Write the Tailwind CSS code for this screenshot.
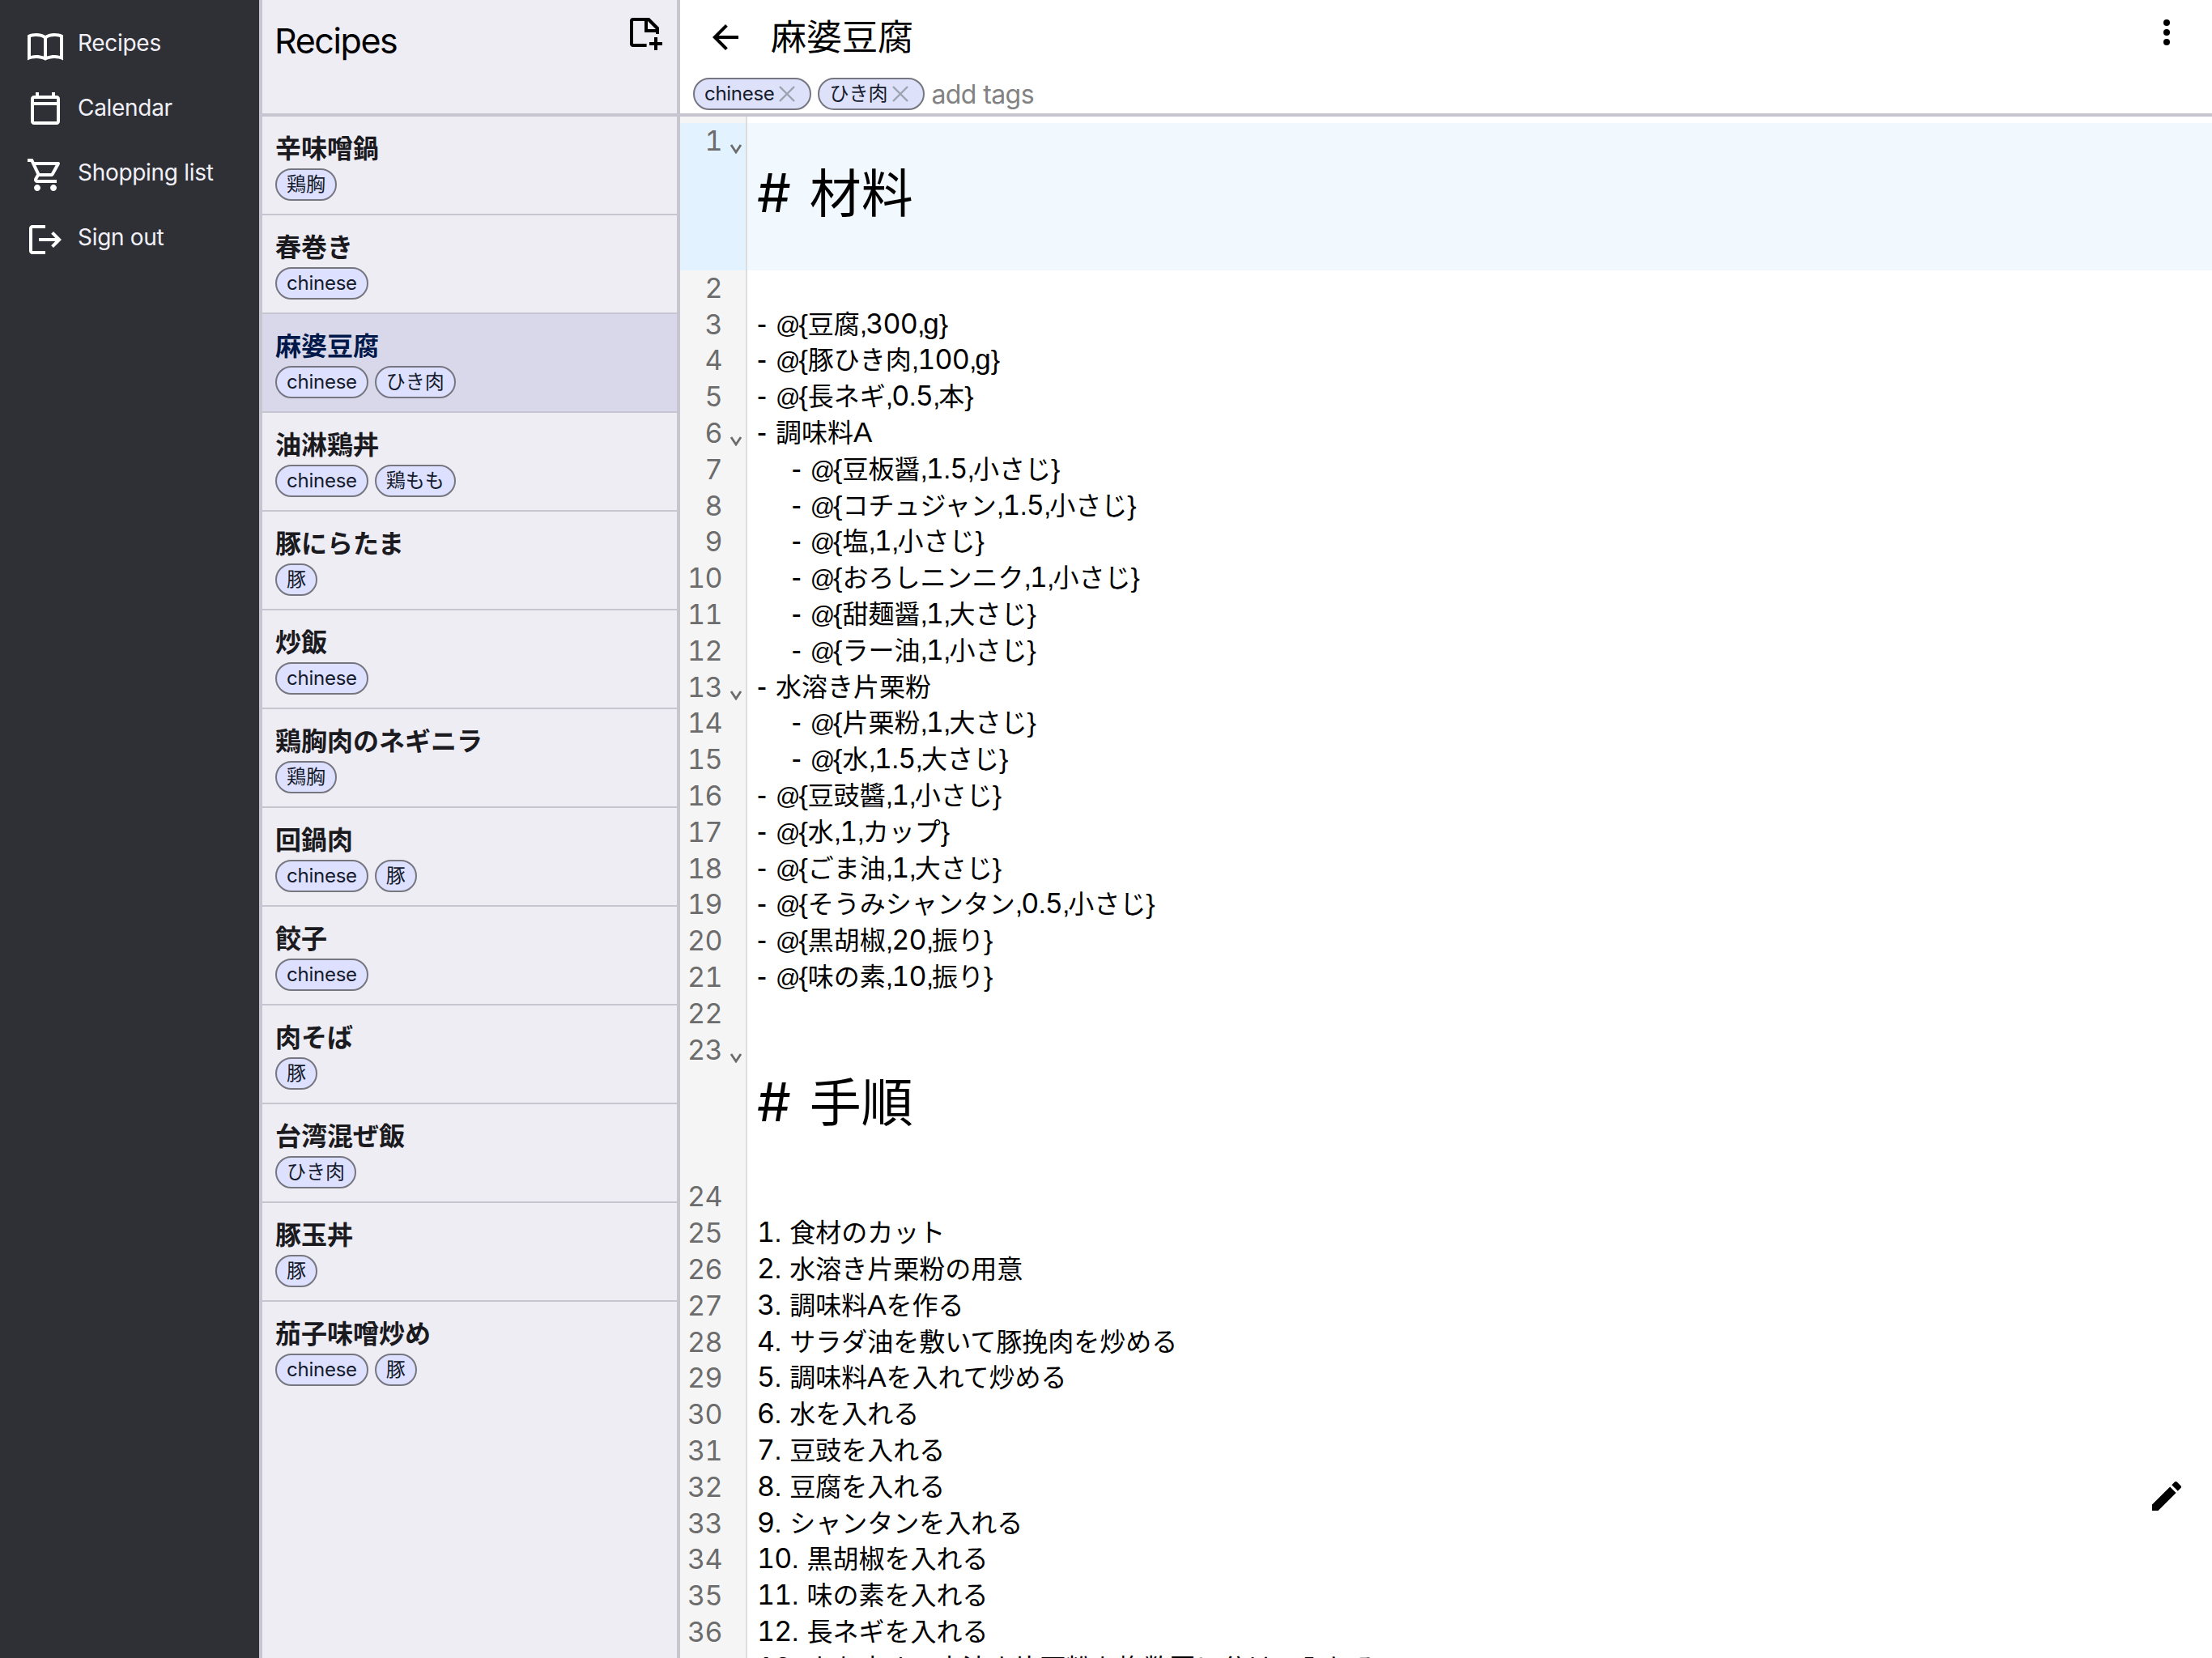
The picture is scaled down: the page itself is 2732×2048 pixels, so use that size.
<!DOCTYPE html>
<html lang="ja">
<head>
    <meta charset="UTF-8">
    <meta name="viewport" content="width=device-width, initial-scale=1.0">
    <title>Recipes</title>
    <script src="https://cdn.jsdelivr.net/npm/@tailwindcss/browser@4"></script>
</head>
<body class="h-screen flex overflow-hidden bg-white text-black font-['Inter','Noto_Sans_CJK_JP',sans-serif]">
    <!-- Navigation -->
    <nav class="w-[324px] shrink-0 bg-[#2f3036] border-r-4 border-[#c7c6d0] text-[#f1f0f7] pt-8 pl-8 flex flex-col gap-8 text-[28px] tracking-[-0.3px]">
        <a class="flex items-start gap-4 h-12">
            <svg class="size-12 fill-white" viewBox="0 0 24 24"><path fill-rule="evenodd" d="M1 5.7C2.6 4.9 4.6 4.5 6.5 4.5S10.6 5 12 6c1.4-1 3.600-1.500 5.500-1.500S21.400 4.900 23 5.700V21.200c-1.700-.8-3.700-1.200-5.500-1.200s-4 .4-5.500 1.400c-1.500-1-3.700-1.400-5.500-1.400s-3.800.4-5.500 1.200zM3 7v11.500c1.100-.3 2.300-.5 3.500-.5 1.500 0 3.100.3 4.500.8V7.700c-1.300-.8-3-1.200-4.500-1.200-1.200 0-2.400.1-3.500.5zM13 7.700v11.100c1.400-.5 3-.8 4.500-.8 1.200 0 2.400.2 3.500.5V7c-1.100-.4-2.300-.5-3.500-.5-1.500 0-3.200.4-4.500 1.200z"/></svg>
            <span class="leading-[42px]">Recipes</span>
        </a>
        <a class="flex items-start gap-4 h-12">
            <svg class="size-12 fill-white" viewBox="0 0 24 24"><path d="M19 3h-1V1h-2v2H8V1H6v2H5c-1.100 0-2 .9-2 2v14c0 1.100.9 2 2 2h14c1.100 0 2-.9 2-2V5c0-1.100-.9-2-2-2zm0 16H5V9h14v10zm0-12H5V5h14v2z"/></svg>
            <span class="leading-[42px]">Calendar</span>
        </a>
        <a class="flex items-start gap-4 h-12">
            <svg class="size-12 fill-white" viewBox="0 0 24 24"><path d="M15.550 13c.75 0 1.410-.41 1.750-1.030l3.580-6.490c.37-.66-.11-1.480-.87-1.480H5.210l-.94-2H1v2h2l3.600 7.590-1.350 2.440C4.520 15.370 5.480 17 7 17h12v-2H7l1.100-2h7.450zM6.160 6h12.150l-2.760 5H8.530L6.160 6zM7 18c-1.100 0-1.990.9-1.990 2S5.900 22 7 22s2-.9 2-2-.9-2-2-2zm10 0c-1.100 0-1.990.9-1.990 2s.89 2 1.990 2 2-.9 2-2-.9-2-2-2z"/></svg>
            <span class="leading-[42px]">Shopping list</span>
        </a>
        <a class="flex items-start gap-4 h-12">
            <svg class="size-12 fill-white" viewBox="0 0 24 24"><path d="M17 7l-1.410 1.410L18.170 11H8v2h10.170l-2.580 2.580L17 17l5-5zM4 5h8V3H4c-1.100 0-2 .9-2 2v14c0 1.100.9 2 2 2h8v-2H4V5z"/></svg>
            <span class="leading-[42px]">Sign out</span>
        </a>
    </nav>

    <!-- Recipe list -->
    <section class="w-[516px] shrink-0 bg-[#eeedf4] border-r-4 border-[#c7c6d0]">
        <header class="h-36 border-b-4 border-[#c7c6d0] pl-[15px] pr-[18px] flex justify-between items-start">
            <h1 class="text-[43px] leading-[70px] pt-[15px] tracking-[-1.4px]">Recipes</h1>
            <svg class="size-12 mt-[18px]" viewBox="0 0 24 24"><path fill-rule="evenodd" d="M22 12h-2v-1h-7V4H6v14h8.300v2H6a2 2 0 0 1-2-2V4a2 2 0 0 1 2-2h10l6 6zM15 4v5h5z"/><path d="M19 14h2v3h3v2h-3v3h-2v-3h-3v-2h3z"/></svg>
        </header>
        <ul id="recipes"></ul>
    </section>

    <!-- Editor -->
    <main class="relative flex-1 flex flex-col min-w-0">
        <header class="h-36 shrink-0 border-b-4 border-[#c7c6d0] flex flex-col">
            <div class="h-24 flex items-start pl-8 pr-8">
                <svg class="size-12 mt-[22px]" viewBox="0 0 24 24"><path d="M20 11H7.830l5.590-5.590L12 4l-8 8 8 8 1.410-1.410L7.830 13H20v-2z"/></svg>
                <h2 class="ml-8 flex-1 text-[44px] leading-[92px]">麻婆豆腐</h2>
                <svg class="size-12 mt-4" viewBox="0 0 24 24"><circle cx="12" cy="6" r="2"/><circle cx="12" cy="12" r="2"/><circle cx="12" cy="18" r="2"/></svg>
            </div>
            <div class="flex pl-4 gap-2">
                <span class="h-10 flex items-center gap-1.5 rounded-full border-2 border-[#767680] bg-[#dde1f9] pl-3 pr-[18px] text-2xl text-[#151b2c] tracking-[-0.3px]">chinese<svg class="size-5 stroke-[#9aa3ae]" viewBox="0 0 20 20" stroke-width="2.400"><path d="M1 1l18 18M19 1L1 19"/></svg></span>
                <span class="h-10 flex items-center gap-1.5 rounded-full border-2 border-[#767680] bg-[#dde1f9] pl-3 pr-[18px] text-2xl text-[#151b2c]">ひき肉<svg class="size-5 stroke-[#9aa3ae]" viewBox="0 0 20 20" stroke-width="2.400"><path d="M1 1l18 18M19 1L1 19"/></svg></span>
                <span class="text-[32px] leading-[42px] text-[#828282] tracking-[-0.6px]">add tags</span>
            </div>
        </header>
        <div id="editor" class="flex-1 min-h-0 overflow-hidden flex flex-col bg-white">
            <div class="h-2 w-[83px] shrink-0 bg-[#f5f5f5] border-r-2 border-[#ddd]"></div>
        </div>
        <svg class="absolute right-8 bottom-[176px] size-12" viewBox="0 0 24 24"><path d="M3 17.250V21h3.750L17.810 9.940l-3.750-3.750L3 17.250zM20.710 7.040c.39-.39.39-1.020 0-1.410l-2.340-2.340c-.39-.39-1.020-.39-1.410 0l-1.830 1.830 3.750 3.750 1.830-1.830z"/></svg>
    </main>

    <script>
        const recipes = [
            ['辛味噌鍋', ['鶏胸']],
            ['春巻き', ['chinese']],
            ['麻婆豆腐', ['chinese', 'ひき肉']],
            ['油淋鶏丼', ['chinese', '鶏もも']],
            ['豚にらたま', ['豚']],
            ['炒飯', ['chinese']],
            ['鶏胸肉のネギニラ', ['鶏胸']],
            ['回鍋肉', ['chinese', '豚']],
            ['餃子', ['chinese']],
            ['肉そば', ['豚']],
            ['台湾混ぜ飯', ['ひき肉']],
            ['豚玉丼', ['豚']],
            ['茄子味噌炒め', ['chinese', '豚']],
        ];
        const selected = 2;

        document.getElementById('recipes').innerHTML = recipes.map(([name, tags], i) => `
            <li class="h-[122px] px-4 pt-[18px] ${i < recipes.length - 1 ? 'border-b-2 border-[#c7c6d0]' : ''} ${i === selected ? 'bg-[#d9d8ea] text-[#001849]' : 'text-[#1b1b1f]'}">
                <div class="h-[46px] text-[32px] leading-[44px] font-bold">${name}</div>
                <div class="flex gap-2">
                    ${tags.map(tag => `<span class="h-10 flex items-center rounded-full border-2 border-[#767680] bg-[#dde1ff] px-3 text-2xl text-[#151b2c] ${tag === 'chinese' ? 'tracking-[-0.25px]' : ''}">${tag}</span>`).join('')}
                </div>
            </li>`).join('');

        const source = `# 材料

- @{豆腐,300,g}
- @{豚ひき肉,100,g}
- @{長ネギ,0.5,本}
- 調味料A
    - @{豆板醤,1.5,小さじ}
    - @{コチュジャン,1.5,小さじ}
    - @{塩,1,小さじ}
    - @{おろしニンニク,1,小さじ}
    - @{甜麺醤,1,大さじ}
    - @{ラー油,1,小さじ}
- 水溶き片栗粉
    - @{片栗粉,1,大さじ}
    - @{水,1.5,大さじ}
- @{豆豉醬,1,小さじ}
- @{水,1,カップ}
- @{ごま油,1,大さじ}
- @{そうみシャンタン,0.5,小さじ}
- @{黒胡椒,20,振り}
- @{味の素,10,振り}

# 手順

1. 食材のカット
2. 水溶き片栗粉の用意
3. 調味料Aを作る
4. サラダ油を敷いて豚挽肉を炒める
5. 調味料Aを入れて炒める
6. 水を入れる
7. 豆豉を入れる
8. 豆腐を入れる
9. シャンタンを入れる
10. 黒胡椒を入れる
11. 味の素を入れる
12. 長ネギを入れる
13. 火を止めて水溶き片栗粉を複数回に分けて入れる`;

        // Latin runs get their own face and spacing beside the kana and kanji
        const latin = [
            [/^@/, "font-['Liberation_Sans'] text-[30px] tracking-[-2px]"],
            [/^[{}]/, "font-['Liberation_Sans'] text-[34px]"],
            [/^,/, "font-['Liberation_Sans'] text-[34px] tracking-[-2.1px]"],
            [/^\./, "font-['Liberation_Sans'] text-[34px] tracking-[-1.2px]"],
            [/^[0-9]+/, "font-['Inter'] tabular-nums text-[34px] tracking-[-0.8px]"],
            [/^-/, "font-['Liberation_Sans'] text-[36px] tracking-[0.3px]"],
            [/^ +/, "font-['Liberation_Sans'] text-[36px] tracking-[0.66px]"],
            [/^[A-Za-z]+/, "font-['Liberation_Sans'] text-[35px]"],
        ];
        function styleLine(line) {
            let html = '';
            while (line) {
                const rule = latin.find(([re]) => re.test(line));
                const text = rule ? line.match(rule[0])[0] : line[0];
                html += rule ? `<span class="leading-none ${rule[1]}">${text}</span>` : text;
                line = line.slice(text.length);
            }
            return html;
        }

        const folds = [1, 6, 13, 23];
        document.getElementById('editor').innerHTML += source.split('\n').map((line, i) => {
            const heading = line.startsWith('# ');
            const active = i === 0;
            const fold = folds.includes(i + 1)
                ? '<svg class="w-4 h-3 mt-[26px] ml-[9px] fill-none stroke-[#6c6c6c]" viewBox="0 0 16 12" stroke-width="2.800"><path d="M2 1l6 9 6-9"/></svg>' : '';
            const text = heading
                ? `<div class="pt-11 text-[64px] leading-[86px] whitespace-pre"><span class="font-['Inter'] text-[66px] leading-none tracking-[2.2px]"># </span>${line.slice(2)}</div>`
                : `<div class="leading-[43px] text-[32px] whitespace-pre">${styleLine(line)}</div>`;
            return `<div class="shrink-0 flex ${heading ? 'h-[181.8px]' : 'h-[44.8px]'}">
                <div class="w-[83px] shrink-0 flex items-start border-r-2 border-[#ddd] ${active ? 'bg-[#e2f2ff]' : 'bg-[#f5f5f5]'}">
                    <span class="w-[52px] text-right font-['Inter'] tabular-nums text-[34px] leading-[43px] tracking-[-0.6px] text-[#6c6c6c]">${i + 1}</span>${fold}
                </div>
                <div class="flex-1 pl-3 ${active ? 'bg-[#f1f9ff]' : ''}">${text}</div>
            </div>`;
        }).join('');
    </script>
</body>
</html>
